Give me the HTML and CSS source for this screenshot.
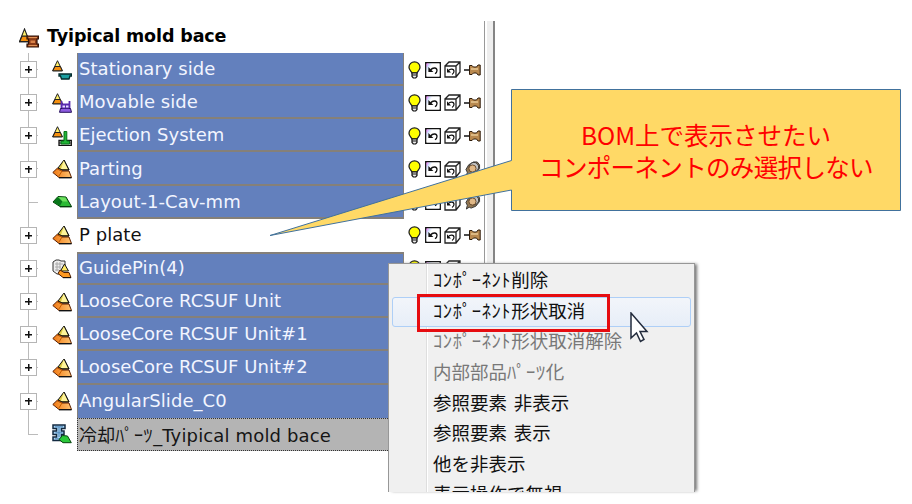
FILE: index.html
```
<!DOCTYPE html>
<html lang="ja">
<head>
<meta charset="utf-8">
<title>Tyipical mold bace</title>
<link rel="stylesheet" href="styles.css">
</head>
<body>
<svg class="defs" aria-hidden="true">
  <defs>
    <linearGradient id="rainbow" x1="0" x2="1" y1="0" y2=".6"><stop offset="0" stop-color="#f6f"/><stop offset=".18" stop-color="#cdf"/><stop offset=".35" stop-color="#fff"/><stop offset="1" stop-color="#fff"/></linearGradient>
    <linearGradient id="orange" x1="0" x2="1"><stop offset="0" stop-color="#f07812"/><stop offset="1" stop-color="#ffc370"/></linearGradient>
    <symbol id="cone" viewBox="0 0 11 12" preserveAspectRatio="none"><path d="M5.5 .7 10.4 10.8H.6z" fill="#fff06a" stroke="#222" /><path d="M3 6.5h5.3l2 4.3H.8z" fill="#f5900f" stroke="#222"/></symbol>
    <symbol id="part" viewBox="0 0 20 20"><path d="M12 1 6 9l4 2h7z" fill="#ddca42" stroke="#111"/><path d="M12 1 9 10h7z" fill="#fff49a"/><path d="M12 1 17 11h-7L5.5 9" fill="none" stroke="#111"/><path d="M5 9.5 10 12h7l2.5 6.5H7L.8 13.5z" fill="url(#orange)" stroke="#5e2100"/><path d="M5 9.5 10 12 6.5 17.7" fill="none" stroke="#c35b00"/><path d="M7 18.7h12.5" stroke="#111" stroke-width="1.4"/></symbol>
    <symbol id="root" viewBox="0 0 20 20"><use href="#cone" width="11" height="15"/><path d="M8 8h11.500v3H18v5h1.500v3H8v-3h1.500v-5H8z" fill="#8a3b18" stroke="#301207" stroke-width="1.2"/><path d="M9.500 9.600h8.500M9.500 17.600h8.500" stroke="#eb9b5c"/><path d="M11.500 12.500h4.500v2.500h-4.500z" fill="#d98249"/></symbol>
    <symbol id="stationary" viewBox="0 0 20 20"><use href="#cone" width="11" height="12"/><path d="M7 14h12.5v2H18l-1 3H9.5l-1-3H7z" fill="#1c9fa1" stroke="#032b2d" stroke-width="1.3"/></symbol>
    <symbol id="movable" viewBox="0 0 20 20"><use href="#cone" width="11" height="12"/><path d="M9.500 8v3.500h8V8M9.500 11v5M17.500 11v5" fill="none" stroke="#5a2bb0" stroke-width="1.800"/><path d="M8.500 15.500h10l1 3.800h-12z" fill="#8d5be0" stroke="#27105a"/><path d="M10 12h7v3h-7z" fill="#e6dcff" stroke="#5a2bb0"/><path d="M13.500 12v3" stroke="#5a2bb0"/></symbol>
    <symbol id="ejection" viewBox="0 0 20 20"><use href="#cone" width="11" height="12"/><path d="M7 14.500h12.300v5H7z" fill="#fff" stroke="#111" stroke-width="1.3"/><path d="M7 17h12" stroke="#111"/><path d="M12 5.500h2.800v9.500H17.500V18H9v-3h3z" fill="#20b536" stroke="#087018"/></symbol>
    <symbol id="layout" viewBox="0 0 20 20"><path d="M1 10 6 4.5l8 .5 5.5 9.5H8z" fill="#2bb934" stroke="#053d0a"/><path d="m6 5-4.5 5L8 14l2.5-5z" fill="#08771a"/><path d="m6 5 7.5.5 2 4h-5z" fill="#6de05d"/><path d="M8 14.7h11.5" stroke="#033d0a" stroke-width="1.4"/></symbol>
    <symbol id="guide" viewBox="0 0 20 20"><path d="M1 3 4 1h3l2 1h4v4l-5 9H5L1 12z" fill="#eee" stroke="#333"/><path d="M3 5h8M3 8h6M3 11h4M5 3v9M8 3v7" stroke="#aaa"/><path d="m12.5 5-4 7h8z" fill="#ffe962" stroke="#111"/><path d="m8 11 4 2.5h5l2 5H11l-5-4z" fill="#ff9a22" stroke="#4d1c00"/><path d="M11 18.7h8" stroke="#111"/></symbol>
    <symbol id="cooling" viewBox="0 0 20 20"><path d="M1 1h12v3.500H9.500V7H12v3.500H9.500V13H12v3.500H1V13h3.500v-2.500H1V7h3.500V4.500H1z" fill="#a9d4f5" stroke="#132a41" stroke-width="1.500"/><path d="M3 2.800h8M7 3v10M3.500 8.800h7M3 14.800h6" stroke="#4d86b8"/><path d="M7 15.500 10.500 11.500l5 .5 3.800 6.700H11z" fill="#2bc83a" stroke="#05460e"/></symbol>
    <symbol id="bulb" viewBox="0 0 13 18"><path d="M4 12C3 10 1 9 1 6.3a5.5 5.5 0 0 1 11 0C12 9 10 10 9 12z" fill="#ff0" stroke="#222" stroke-width="1.3"/><path d="M4 12h5v3.5L7.7 17H5.3L4 15.5z" fill="#eee" stroke="#111" stroke-width="1.2"/><path d="M4 14h5" stroke="#111"/></symbol>
    <symbol id="undo" viewBox="0 0 16 16"><path d="M.8.8h14.4v14.4H.8z" fill="#fff" stroke="#111" stroke-width="1.5"/><path d="M1.500 1.500h13v13h-13z" fill="url(#rainbow)"/><path d="M3.4 5v5h5z" fill="#111"/><path d="M5.5 8C8 5 12 5.5 12 8.5c0 2-1 2.7-2 3.3" fill="none" stroke="#111" stroke-width="1.3"/></symbol>
    <symbol id="cube" viewBox="0 0 17 17"><path d="M1 5h11v11H1zM1 5l4-4h11v10l-4 5M12 5l4-4" fill="#fff" stroke="#222" stroke-width="1.3"/><path d="M3 7.2v4.3h4z" fill="#111"/><path d="M4.5 9.5C6 7.5 10 7.5 10 10.3 10 12 9 13 8 13.5" fill="none" stroke="#111" stroke-width="1.2"/></symbol>
    <symbol id="pin" viewBox="0 0 17 14"><path d="M0 7h6" stroke="#111" stroke-width="1.5"/><path d="M5.500 2.500h2.500l1.500 1.500h3L14 2h2.200v10H14l-1.500-2h-3L8 11.500H5.500z" fill="#b9894f" stroke="#2d1a09"/><path d="M7 6h7" stroke="#f2d4a0" stroke-width="1.3"/></symbol>
    <symbol id="push" viewBox="0 0 17 17"><path d="M2 16 3 12 1.500 9l3-5 5-3h4l2.500 3v4l-4 5-5 2-2-1z" fill="#907653" stroke="#333"/><circle cx="10" cy="6.500" r="5" fill="#c4c4c4" stroke="#333"/><circle cx="8.500" cy="8" r="3.8" fill="#e0b887" stroke="#654628"/></symbol>
  </defs>
</svg>
<main class="screen">
  <section class="tree">
    <header class="root"><svg class="type"><use href="#root"/></svg><h1>Tyipical mold bace</h1></header>
    <ul class="rows">
      <li class="row"><span class="toggle"></span><svg class="type"><use href="#stationary"/></svg><span class="label"><span>Stationary side</span></span><span class="tools"><svg class="bulb"><use href="#bulb"/></svg><svg class="undo"><use href="#undo"/></svg><svg class="cube"><use href="#cube"/></svg><svg class="pin"><use href="#pin"/></svg></span></li>
      <li class="row"><span class="toggle"></span><svg class="type"><use href="#movable"/></svg><span class="label"><span>Movable side</span></span><span class="tools"><svg class="bulb"><use href="#bulb"/></svg><svg class="undo"><use href="#undo"/></svg><svg class="cube"><use href="#cube"/></svg><svg class="pin"><use href="#pin"/></svg></span></li>
      <li class="row"><span class="toggle"></span><svg class="type"><use href="#ejection"/></svg><span class="label"><span>Ejection System</span></span><span class="tools"><svg class="bulb"><use href="#bulb"/></svg><svg class="undo"><use href="#undo"/></svg><svg class="cube"><use href="#cube"/></svg><svg class="pin"><use href="#pin"/></svg></span></li>
      <li class="row"><span class="toggle"></span><svg class="type"><use href="#part"/></svg><span class="label"><span>Parting</span></span><span class="tools"><svg class="bulb"><use href="#bulb"/></svg><svg class="undo"><use href="#undo"/></svg><svg class="cube"><use href="#cube"/></svg><svg class="pin"><use href="#push"/></svg></span></li>
      <li class="row"><span class="toggle leaf"></span><svg class="type"><use href="#layout"/></svg><span class="label"><span>Layout-1-Cav-mm</span></span><span class="tools"><svg class="bulb"><use href="#bulb"/></svg><svg class="undo"><use href="#undo"/></svg><svg class="cube"><use href="#cube"/></svg><svg class="pin"><use href="#push"/></svg></span></li>
      <li class="row"><span class="toggle"></span><svg class="type"><use href="#part"/></svg><span class="label plain"><span>P plate</span></span><span class="tools"><svg class="bulb"><use href="#bulb"/></svg><svg class="undo"><use href="#undo"/></svg><svg class="cube"><use href="#cube"/></svg><svg class="pin"><use href="#pin"/></svg></span></li>
      <li class="row"><span class="toggle"></span><svg class="type"><use href="#guide"/></svg><span class="label first"><span>GuidePin(4)</span></span><span class="tools"><svg class="bulb"><use href="#bulb"/></svg><svg class="undo"><use href="#undo"/></svg><svg class="cube"><use href="#cube"/></svg></span></li>
      <li class="row"><span class="toggle"></span><svg class="type"><use href="#part"/></svg><span class="label"><span>LooseCore RCSUF Unit</span></span></li>
      <li class="row"><span class="toggle"></span><svg class="type"><use href="#part"/></svg><span class="label"><span>LooseCore RCSUF Unit#1</span></span></li>
      <li class="row"><span class="toggle"></span><svg class="type"><use href="#part"/></svg><span class="label"><span>LooseCore RCSUF Unit#2</span></span></li>
      <li class="row"><span class="toggle"></span><svg class="type"><use href="#part"/></svg><span class="label last"><span>AngularSlide_C0</span></span></li>
      <li class="row"><span class="toggle leaf end"></span><svg class="type"><use href="#cooling"/></svg><span class="label focus"><span><span class="jp">冷却<span class="kana">ﾊﾟｰﾂ</span></span>_Tyipical mold bace</span></span></li>
    </ul>
  </section>
  <div class="splitter"></div>
</main>
<svg class="callout" viewBox="0 0 912 504">
  <path d="M511.5 89.5H900.5V210.5H511.5V190L270 235.5 511.5 160.5z"/>
</svg>
<div class="message"><p class="m1">BOM上で表示させたい</p><p class="m2">コンポーネントのみ選択しない</p></div>
<nav class="menu">
  <ul>
    <li><span class="kana">ｺﾝﾎﾟｰﾈﾝﾄ</span>削除</li>
    <li class="hover"><span class="kana">ｺﾝﾎﾟｰﾈﾝﾄ</span>形状取消</li>
    <li class="off"><span class="kana">ｺﾝﾎﾟｰﾈﾝﾄ</span>形状取消解除</li>
    <li class="off">内部部品<span class="kana">ﾊﾟｰﾂ</span>化</li>
    <li>参照要素 非表示</li>
    <li>参照要素 表示</li>
    <li>他を非表示</li>
    <li class="cut">表示操作で無視</li>
  </ul>
</nav>
<div class="highlight"></div>
<svg class="cursor" viewBox="0 0 20 31"><path d="M2 1v25l5.500-5 4 8.500 3.500-2-4-8H18z" fill="#fff" stroke="#222b3c" stroke-width="1.500"/></svg>
</body>
</html>
```
FILE: styles.css
```
* { box-sizing: border-box; }
body { margin: 0; width: 912px; height: 504px; overflow: hidden; position: relative; background: #fff; color: #111; font-family: "DejaVu Sans", "Noto Sans CJK JP", sans-serif; }
ul, p, h1 { margin: 0; padding: 0; list-style: none; }
.defs { position: absolute; width: 0; height: 0; }
.screen { display: flex; padding-top: 21px; height: 492px; }
.tree { width: 484px; }
.root { height: 32px; padding-left: 19px; display: flex; align-items: center; gap: 8px; padding-bottom: 2px; }
.root h1 { font-size: 17.5px; line-height: 28px; font-weight: bold; letter-spacing: -.12px; white-space: nowrap; color: #000; }
.type { width: 20px; height: 20px; flex: none; }
.root .type { margin-top: 3px; }
.row { display: flex; height: 33.17px; align-items: center; padding-left: 20px; }
.toggle { width: 18px; height: 100%; margin-right: 14px; flex: none; display: grid; align-items: center;
  background: linear-gradient(#bbb, #bbb) 8px 0 / 1px 100% no-repeat, linear-gradient(#bbb, #bbb) 8px 16px / 10px 1px no-repeat; }
.toggle::before { content: ""; width: 15px; height: 15px; border: 1px solid #b5b5b5;
  background: linear-gradient(#111, #111) center / 7px 1.5px no-repeat, linear-gradient(#111, #111) center / 1.5px 7px no-repeat, #fff; }
.toggle.leaf::before { display: none; }
.toggle.end { background-size: 1px 17px, 10px 1px; }
.label { width: 327px; height: 100%; margin-left: 5px; padding: 1px 0 0 1px; display: flex; align-items: center; background: #6380bd; color: #f2f5ff; border: solid #858079; border-width: 0 1px 2px; font-size: 18px; letter-spacing: .05px; line-height: 28px; white-space: nowrap; flex: none; }
.label.plain { background: #fff; color: #111; border-color: #fff; }
.label.first { border-top-width: 2px; padding-top: 0; padding-bottom: 1px; }
.label.last { border-bottom: 0; padding: 0 0 1px 1px; }
.label.focus { background: #b4b4b4; color: #151515; border: 1px dotted #333; letter-spacing: .15px; }
.jp { font-family: "Noto Sans CJK JP", sans-serif; }
.tools { display: flex; align-items: center; padding-left: 4px; }
.bulb { width: 13px; height: 18px; margin-right: 4px; }
.undo { width: 16px; height: 16px; margin-right: 3px; }
.cube { width: 17px; height: 17px; margin-right: 3px; }
.pin { width: 17px; height: 16px; }
.splitter { width: 11px; border-left: 1px solid #999; border-right: 2px solid #858585; background: linear-gradient(90deg, #fff 0 2px, #eee 2px); }
.callout { position: absolute; inset: 0; width: 912px; height: 504px; }
.callout path { fill: #ffd966; stroke: #41719c; stroke-width: 1; }
.message { position: absolute; left: 511px; top: 89px; width: 390px; height: 122px; padding-top: 30px; text-align: center; font-family: "Noto Sans CJK JP", sans-serif; font-size: 24.5px; line-height: 32px; color: #f00; white-space: nowrap; }
.m2 { letter-spacing: -.65px; }
.menu { position: absolute; left: 388px; top: 263px; width: 307px; height: 229px; overflow: hidden; padding: 2px 3px; border: 1px solid #979797; border-bottom: 0; background: linear-gradient(90deg, transparent 37px, #dedede 37px 38px, #fff 38px 39px, transparent 39px), #f0f0f0; box-shadow: 3px 0 3px -1px #777; font-family: "Noto Sans CJK JP", sans-serif; font-size: 18.5px; }
.menu li { height: 30.7px; line-height: 26px; padding-left: 41px; white-space: pre; word-spacing: 2.5px; color: #111; }
.menu .off { color: #787878; }
.menu .hover { line-height: 24px; background: linear-gradient(#f2f5fa, #e7eef8); border: 1px solid #aecff7; border-radius: 3px; padding-left: 40px; }
.menu .cut { line-height: 24px; }
.kana { letter-spacing: .6px; }
.highlight { position: absolute; left: 417px; top: 294px; width: 193px; height: 38px; border: 3px solid #e60c10; }
.cursor { position: absolute; left: 629px; top: 312px; width: 20px; height: 31px; }
```
